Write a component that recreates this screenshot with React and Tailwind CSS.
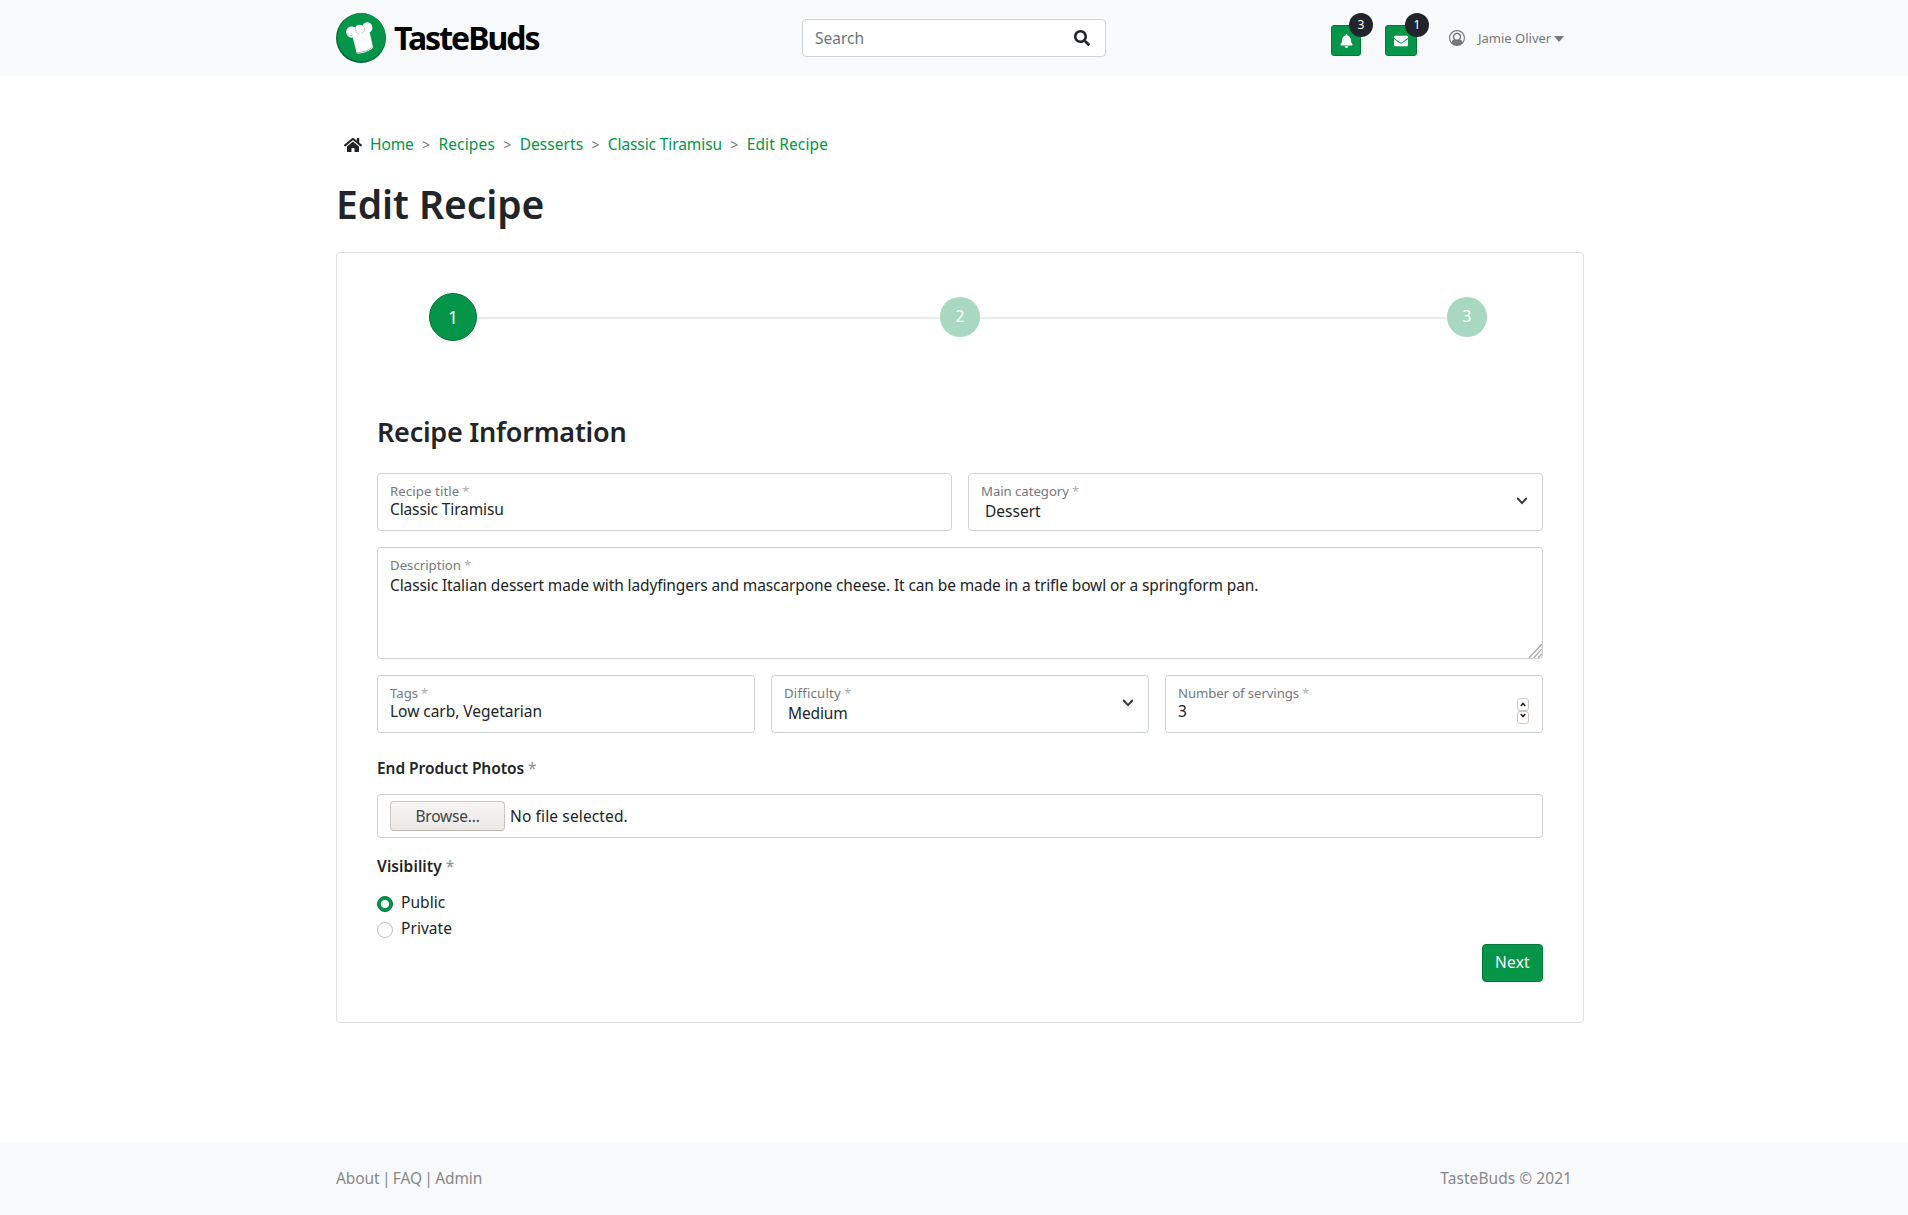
import React from "react";
import { FaSearch, FaBell, FaEnvelope, FaHome } from "react-icons/fa";

function Logo() {
  return (
    <svg width="50" height="50" viewBox="0 0 50 50">
      <circle cx="25" cy="25" r="25" fill="#036b34" />
      <circle cx="25.4" cy="24.2" r="24.1" fill="#059549" />
      <path d="M16.800 24.500C14 25.500 9.500 22 10.200 18C10.800 14 15.500 12 19.500 14.500C20 11.500 24.500 11 26.800 12.700C27 8.500 34.500 8 35.700 12C37.500 15.500 35.500 18.500 33.700 19.300L37 34.500C34.500 38 26 41 20.800 40.500Z" fill="#fff" />
      <path d="M19.500 14.500C19 18 20.500 20.500 23 20.500M26.800 12.700C29.500 14.500 29 18.500 26 20M11 20C12 23 15 23.500 16.500 22" fill="none" stroke="#b0b5b2" strokeWidth=".8" />
      <path d="M20.500 39.500C27 39.500 33 37.500 36.500 34" fill="none" stroke="#a9aeab" strokeWidth="1" />
    </svg>
  );
}

function UserCircle({ className = "" }) {
  return (
    <svg width="16" height="16" viewBox="0 0 16 16" fill="currentColor" className={className}>
      <path
        fillRule="evenodd"
        d="M8 0A8 8 0 1 1 8 16A8 8 0 1 1 8 0ZM8 1.200A6.800 6.800 0 0 0 2.700 12.200C3.100 10.700 4 9.600 5.200 9.600A3.900 3.900 0 1 1 10.800 9.600C12 9.600 12.900 10.700 13.300 12.200A6.800 6.800 0 0 0 8 1.200Z"
      />
      <circle cx="8" cy="6.800" r="2.900" fill="#f8f9fa" />
      <circle cx="8" cy="6.800" r="3.400" fill="none" stroke="currentColor" strokeWidth="1.100" />
    </svg>
  );
}

function Chevron({ className = "" }) {
  return (
    <svg width="16" height="16" viewBox="0 0 16 16" fill="none" stroke="#343a40" strokeWidth="1.9" className={className}>
      <path d="M3.800 5.500L8 10.200l4.200-4.700" strokeLinecap="round" strokeLinejoin="round" />
    </svg>
  );
}

function Stepper() {
  return (
    <div className="mr-px flex h-[26px] w-[12px] flex-col">
      <span className="flex h-[13px] items-center justify-center rounded-[3px] border border-[#cdc7c2]">
        <svg width="6" height="5" viewBox="0 0 6 5" fill="none" stroke="#222" strokeWidth="1.5"><path d="M.8 4L3 1.500 5.200 4" /></svg>
      </span>
      <span className="flex h-[13px] items-center justify-center rounded-[3px] border border-[#cdc7c2]">
        <svg width="6" height="5" viewBox="0 0 6 5" fill="none" stroke="#222" strokeWidth="1.5" className="-mt-1"><path d="M.8 1L3 3.500 5.200 1" /></svg>
      </span>
    </div>
  );
}

function Field({ label, value, kind = "text", className = "", labelClass = "", valueClass = "" }) {
  const isSelect = kind === "select";
  return (
    <div className={"flex rounded border border-[#ced4da] bg-white px-3 pt-[9px] " + className}>
      <div className="flex min-w-0 flex-1 flex-col whitespace-nowrap">
        <div className="h-4 text-[13.2px] leading-4 text-[#75797d]">
          <span className={labelClass}>{label}</span>
          <span className="ml-[3px] opacity-60">*</span>
        </div>
        <div className={(isSelect ? "h-6 pl-1 leading-6 " : kind === "area" ? "h-6 leading-6 " : "h-6 leading-[21px] ") + valueClass}>{value}</div>
      </div>
      {isSelect && <Chevron className="mt-[10px]" />}
      {kind === "number" && <div className="mt-[13px]"><Stepper /></div>}
    </div>
  );
}

function IconButton({ children, count, className }) {
  return (
    <div className={"relative flex h-[31px] items-center justify-center rounded-[3px] border border-[#03763a] bg-[#059549] text-white " + className}>
      {children}
      <span className="absolute -top-[13px] -right-[13px] flex h-6 w-6 items-center justify-center rounded-full bg-[#212529] text-[12px]">{count}</span>
    </div>
  );
}

const crumbs = [
  ["Home", "tracking-[-0.1px]"],
  ["Recipes", "tracking-[0.15px]"],
  ["Desserts", "tracking-[0.05px]"],
  ["Classic Tiramisu", "tracking-[-0.1px]"],
  ["Edit Recipe", "tracking-[0.15px]"],
];

function Breadcrumb() {
  return (
    <nav className="flex h-6 items-center pt-px pl-2 whitespace-nowrap text-[#059549]">
      <FaHome className="mr-2 h-[18px] w-[18px] text-[#212529]" />
      {crumbs.map(([name, tracking], i) => (
        <React.Fragment key={name}>
          {i > 0 && <span className="w-[24.7px] text-center text-[14px] text-[#6c757d]">&gt;</span>}
          <a className={tracking}>{name}</a>
        </React.Fragment>
      ))}
    </nav>
  );
}

function Steps() {
  return (
    <div className="flex h-12 items-center pl-[52px]">
      <span className="flex h-12 w-12 items-center justify-center rounded-full border border-[#03763a] bg-[#059549] text-[17.5px] text-white">1</span>
      <span className="mt-0.5 h-0.5 w-[463px] bg-[#e9ecef]" />
      <span className="flex h-10 w-10 items-center justify-center rounded-full bg-[#a8d8bf] text-white">2</span>
      <span className="mt-0.5 h-0.5 w-[467px] bg-[#e9ecef]" />
      <span className="flex h-10 w-10 items-center justify-center rounded-full bg-[#a8d8bf] text-white">3</span>
    </div>
  );
}

function Radio({ label, checked }) {
  return (
    <label className="flex h-[26px] items-center gap-2 tracking-[0.05px]">
      <span className={"mt-px flex h-4 w-4 items-center justify-center rounded-full border " + (checked ? "border-[#03763a] bg-[#059549]" : "border-[#bfbfbf] bg-white")}>
        {checked && <span className="h-2 w-2 rounded-full bg-white" />}
      </span>
      {label}
    </label>
  );
}

export default function App() {
  return (
    <div className="flex h-[1215px] flex-col bg-white font-['Noto_Sans',sans-serif] text-[15.5px] text-[#212529]">
      <header className="flex h-[76px] items-center bg-[#f8f9fa] pl-[336px]">
        <Logo />
        <span className="ml-2 w-[408px] text-[32px] leading-none font-bold tracking-[-2px] text-black">TasteBuds</span>
        <div className="flex h-[38px] w-[304px] items-center justify-between rounded border border-[#ced4da] bg-white pr-[15px] pl-3 text-[#6c757d]">
          <span className="pt-px">Search</span>
          <FaSearch className="h-4 w-4 text-[#212529]" />
        </div>
        <div className="mt-[5px] ml-[225px] flex gap-6">
          <IconButton count={3} className="w-[30px]"><FaBell className="h-[14px] w-[13px]" /></IconButton>
          <IconButton count={1} className="w-8"><FaEnvelope className="h-[14px] w-[14px]" /></IconButton>
        </div>
        <UserCircle className="ml-8 text-[#75787b]" />
        <span className="ml-[13px] flex items-center pt-px text-[13px] text-[#75787b]">
          Jamie Oliver
          <svg width="10" height="6" viewBox="0 0 10 6" fill="currentColor" className="ml-[3px]">
            <path d="M0 0h10L5 6z" />
          </svg>
        </span>
      </header>

      <main className="flex-1 pt-14 pl-[336px]">
        <Breadcrumb />
        <h1 className="mt-6 h-12 text-[39px] leading-[48px] font-semibold tracking-[-0.05px]">Edit Recipe</h1>
        <section className="mt-6 h-[771px] w-[1248px] rounded border border-[#dfdfdf] px-10 pt-10">
          <Steps />
          <h2 className="mt-[74px] h-[34px] text-[27px] leading-[34px] font-semibold tracking-[-0.25px]">Recipe Information</h2>
          <div className="mt-6 grid grid-cols-2 gap-4">
            <Field className="h-[58px]" label="Recipe title" labelClass="tracking-[0.1px]" value="Classic Tiramisu" valueClass="tracking-[-0.13px]" />
            <Field className="h-[58px]" kind="select" label="Main category" labelClass="tracking-[-0.05px]" value="Dessert" />
          </div>
          <div className="relative mt-4">
            <Field
              className="h-28"
              kind="area"
              label="Description"
              value="Classic Italian dessert made with ladyfingers and mascarpone cheese. It can be made in a trifle bowl or a springform pan."
              valueClass="tracking-[-0.113px]"
            />
            <svg width="14" height="14" viewBox="0 0 14 14" className="absolute right-px bottom-px" stroke="#a3a3a3" strokeWidth="1.2" fill="none">
              <path d="M1 14L14 0M5.500 14L14 5M10 14L14 9.700" />
            </svg>
          </div>
          <div className="mt-4 grid grid-cols-3 gap-4">
            <Field className="h-[58px]" label="Tags" value="Low carb, Vegetarian" valueClass="tracking-[-0.03px]" />
            <Field className="h-[58px]" kind="select" label="Difficulty" labelClass="tracking-[0.2px]" value="Medium" valueClass="tracking-[-0.15px]" />
            <Field className="h-[58px]" kind="number" label="Number of servings" labelClass="tracking-[-0.1px]" value="3" />
          </div>
          <div className="mt-[23px] h-6 leading-6">
            <span className="font-semibold tracking-[-0.05px]">End Product Photos</span>
            <span className="ml-1 text-[#8b8f93]">*</span>
          </div>
          <div className="mt-[14px] flex h-11 items-center rounded border border-[#ced4da] px-3">
            <button className="flex h-[30px] w-[115px] items-center justify-center rounded border border-[#cdc7c2] border-b-[#bfb8b1] bg-gradient-to-b from-[#f6f5f4] to-[#ebe9e8] pt-px tracking-[-0.2px] text-[#3f4547]">Browse...</button>
            <span className="ml-[5px] pt-px tracking-[0.13px]">No file selected.</span>
          </div>
          <div className="mt-4 h-6 leading-6">
            <span className="font-semibold tracking-[0.1px]">Visibility</span>
            <span className="ml-1 text-[#8b8f93]">*</span>
          </div>
          <div className="mt-3">
            <Radio label="Public" checked />
            <Radio label="Private" />
          </div>
          <div className="mt-0.5 flex justify-end">
            <button className="h-[38px] w-[61px] rounded border border-[#03763a] bg-[#059549] tracking-[0.2px] text-white">Next</button>
          </div>
        </section>
      </main>

      <footer className="flex h-[72px] items-center justify-between bg-[#f8f9fa] pr-[336px] pl-[336px] text-[#868889]">
        <span className="tracking-[-0.1px] [word-spacing:-1.5px]">About | FAQ | Admin</span>
        <span className="tracking-[0.05px]">TasteBuds © 2021</span>
      </footer>
    </div>
  );
}
